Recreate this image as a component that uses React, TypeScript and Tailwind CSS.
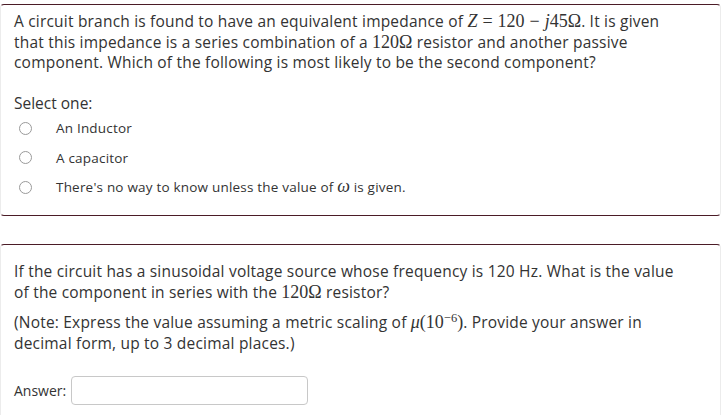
import React from "react";

const M = ({ children, i }: { children: React.ReactNode; i?: boolean }) => (
  <span className={`font-['Liberation_Serif',serif] text-[18px] leading-none tracking-normal ${i ? "italic" : ""}`}>
    {children}
  </span>
);

const Op = ({ children }: { children: React.ReactNode }) => (
  <span className="font-['Liberation_Serif',serif] text-[18px] leading-none tracking-normal px-[5px]">{children}</span>
);

function Radio() {
  return <span className="w-[13px] h-[13px] rounded-full border border-[#9a9a9a] bg-white shrink-0" />;
}

const options = [
  <>An Inductor</>,
  <>A capacitor</>,
  <>
    There's no way to know unless the value of <M i>ω</M> is given.
  </>,
];

export default function App() {
  return (
    <div className="w-[721px] h-[415px] overflow-hidden bg-white text-[#333] font-['Open_Sans',sans-serif] pt-1">
      <div className="border-y border-x border-y-[#4b1c27] border-x-[#ececec] rounded-[4px] h-[212px] px-[13px] pt-[6px]">
        <p className="text-[15.5px] tracking-[0.2px] leading-[20.5px] whitespace-nowrap">
          A circuit branch is found to have an equivalent impedance of <M i>Z</M>
          <Op>=</Op>
          <M>120</M>
          <Op>−</Op>
          <M i>j</M>
          <M>45Ω</M>. It is given
          <br />
          that this impedance is a series combination of a <M>120Ω</M> resistor and another passive
          <br />
          component. Which of the following is most likely to be the second component?
        </p>
        <p className="text-[15.5px] mt-[20px] leading-[20px]">Select one:</p>
        <div className="flex flex-col mt-[1px]">
          {options.map((o, k) => (
            <div key={k} className="flex items-center h-[29.5px]">
              <span className="w-[42px] flex pl-[5px]">
                <Radio />
              </span>
              <span className="text-[13.5px] tracking-[0.2px]">{o}</span>
            </div>
          ))}
        </div>
      </div>
      <div className="mt-[28px] border-y border-x border-y-[#4b1c27] border-x-[#ececec] rounded-[4px] h-[200px] px-[13px] pt-[16px]">
        <p className="text-[15.5px] tracking-[0.2px] leading-[20.5px] whitespace-nowrap">
          If the circuit has a sinusoidal voltage source whose frequency is 120 Hz. What is the value
          <br />
          of the component in series with the <M>120Ω</M> resistor?
        </p>
        <p className="text-[15.5px] tracking-[0.2px] leading-[20.5px] mt-[10px] whitespace-nowrap">
          (Note: Express the value assuming a metric scaling of <M i>μ</M>
          <M>
            (10<sup className="text-[12.5px]">−6</sup>)
          </M>
          . Provide your answer in
          <br />
          decimal form, up to 3 decimal places.)
        </p>
        <div className="flex items-center mt-[23px] gap-[5px]">
          <span className="text-[14px]">Answer:</span>
          <input className="w-[237px] h-[29px] border border-[#c8c8c8] rounded-[4px] outline-none" />
        </div>
      </div>
    </div>
  );
}
